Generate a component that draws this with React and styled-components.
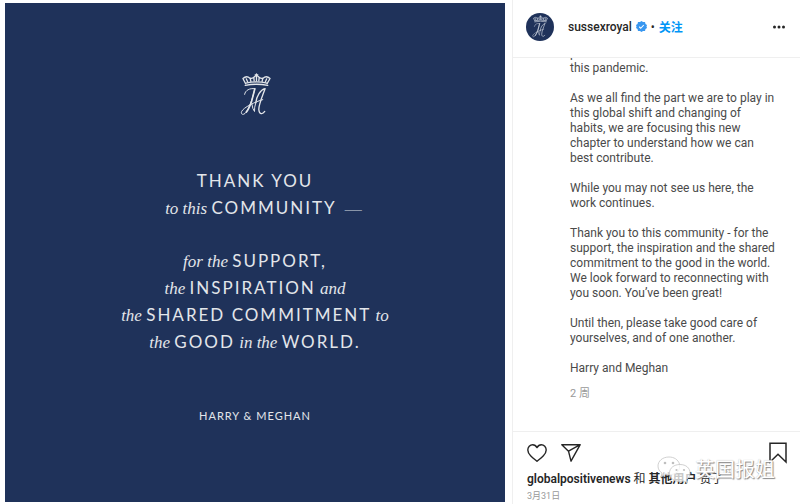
import React from 'react';
import styled, { createGlobalStyle } from 'styled-components';

const GlobalStyle = createGlobalStyle`
  * {
    box-sizing: border-box;
  }

  body {
    margin: 0;
    background: #fff;
    color: #262626;
    font-family: Roboto, 'Noto Sans CJK SC', sans-serif;
  }
`;

const Page = styled.main`
  position: relative;
  display: grid;
  grid-template-columns: minmax(0, 1fr) 288px;
  column-gap: 7px;
  height: 100vh;
  padding-left: 5px;
`;

/* left side: the posted picture */
const Poster = styled.section`
  display: flex;
  flex-direction: column;
  align-items: center;
  margin: 3px 0 2px;
  padding-top: 69px;
  background: #1f325a;
  color: #e3e6ea;
`;

const Message = styled.p`
  margin: ${(props) => props.$top}px 0 0;
  font-family: 'Liberation Serif', serif;
  font-size: 17px;
  font-style: italic;
  line-height: 27px;
  text-align: center;
  white-space: nowrap;
`;

const Caps = styled.span`
  font-family: Lato, sans-serif;
  font-style: normal;
  line-height: 1;
  letter-spacing: 2px;
`;

/* hangs outside the centred line */
const Dash = styled.span`
  display: inline-block;
  width: 0;
  padding-left: 4px;
  color: #8995a8;
  font-style: normal;
  line-height: 1;
`;

const Signature = styled.p`
  margin: 52px 0 0;
  font-family: Lato, sans-serif;
  font-size: 11px;
  line-height: 16px;
  letter-spacing: 1px;
`;

/* right side */
const Panel = styled.aside`
  display: flex;
  flex-direction: column;
  min-height: 0;
  border-left: 1px solid #efefef;
`;

const Header = styled.header`
  display: flex;
  flex: none;
  align-items: center;
  height: 58px;
  padding: 0 14px 4px 13px;
  border-bottom: 1px solid #efefef;
  font-size: 12px;
`;

const Avatar = styled.span`
  display: flex;
  align-items: center;
  justify-content: center;
  width: 28px;
  height: 28px;
  margin-right: 14px;
  border-radius: 50%;
  background: #1f325a;
  color: #c9d0dc;
`;

const UserLink = styled.a`
  color: #262626;
  font-weight: ${(props) => (props.$bold ? 600 : 500)};
  text-decoration: none;
`;

const Badge = styled.svg`
  margin: 0 4px;
`;

const PlainButton = styled.button`
  display: flex;
  padding: 0;
  border: 0;
  background: none;
  color: #262626;
  font: inherit;
  cursor: pointer;
`;

const FollowButton = styled(PlainButton)`
  margin-left: 4px;
  color: #0095f6;
  font-weight: 700;
`;

const EndButton = styled(PlainButton)`
  margin-left: auto;
`;

/* scrolled to its end, so the text sits on the bottom edge */
const Caption = styled.div`
  display: flex;
  flex: 1;
  flex-direction: column;
  justify-content: flex-end;
  min-height: 0;
  padding: 0 12px 30px 57px;
  overflow: hidden;
  color: #4a4a4a;
  font-size: 12px;
  line-height: 15px;
`;

const Paragraph = styled.p`
  flex: none;
  margin: 0 0 15px;
  white-space: pre-line;
`;

const Age = styled.time`
  flex: none;
  margin-top: -5px;
  color: #999;
  font-size: 11px;
`;

const Footer = styled.footer`
  flex: none;
  padding: 10px 13px 0 14px;
  border-top: 1px solid #efefef;
`;

const Actions = styled.div`
  display: flex;
  align-items: center;
  gap: 14px;
  height: 22px;
`;

const Likes = styled.p`
  margin: 6px 0 0;
  font-size: 12px;
  line-height: 18px;
  white-space: nowrap;
`;

const Posted = styled.time`
  display: block;
  color: #999;
  font-size: 9px;
  line-height: 16px;
`;

const Watermark = styled.div`
  position: absolute;
  right: 25px;
  bottom: 19px;
  display: flex;
  align-items: center;
  gap: 4px;
  color: #fff;
  font-size: 20px;
  line-height: 30px;
  text-shadow: 1px 1px 1px #888, 0 0 1px #bbb;
  pointer-events: none;
`;

const Monogram = ({ width, height }) => (
  <svg width={width} height={height} viewBox="55 38 100 135" fill="none" stroke="currentColor" strokeLinecap="round" strokeLinejoin="round" aria-hidden="true">
    <path d="M74 78Q108 71 142 78M76 71Q108 64 140 71" strokeWidth="4" />
    <path d="M75 73L67 57Q78 47 88 56Q96 59 103 51L108 46L113 51Q120 59 128 56Q138 47 149 57L140 73" strokeWidth="4" />
    <path d="M81 67l-4-9M91 66l-2-9M101 64l-1-8M108 64V43M104 46h8M115 64l1-8M125 66l2-9M135 67l4-9" strokeWidth="4" />
    <path d="M72 105C74 92 88 86 103 88C97 112 89 142 77 159C69 170 59 166 63 157C68 145 105 127 127 121" strokeWidth="3" />
    <path d="M103 88L93 127Q84 151 77 159" strokeWidth="5" />
    <path d="M94 135Q96 150 102 157Q101 145 106 130" strokeWidth="3" />
    <path d="M134 88C120 91 108 110 106 130M134 88C127 108 115 135 115 151C116 166 126 167 133 157" strokeWidth="4" />
  </svg>
);

const HeartIcon = () => (
  <svg width="20" height="20" viewBox="0 0 20 20" fill="none" stroke="currentColor" strokeWidth="1.4" strokeLinejoin="round" aria-hidden="true">
    <path d="M10 18.3C8 16.6 5.8 14.9 3.6 12.7C1.8 10.9.8 9.4.8 7.1C.8 4.1 3 1.7 5.7 1.7C7.6 1.7 9 2.7 10 4.6C11 2.7 12.4 1.7 14.3 1.7C17 1.7 19.2 4.1 19.2 7.1C19.2 9.4 18.2 10.9 16.4 12.7C14.2 14.9 12 16.6 10 18.3Z" />
  </svg>
);

const ShareIcon = () => (
  <svg width="20" height="20" viewBox="0 0 20 20" fill="none" stroke="currentColor" strokeWidth="1.4" strokeLinejoin="round" aria-hidden="true">
    <path d="M.8 1.7H19.2L10 18.2L7.5 8.2ZM7.5 8.2L19.2 1.7" />
  </svg>
);

const SaveIcon = () => (
  <svg width="18" height="22" viewBox="0 0 18 22" fill="none" stroke="currentColor" strokeWidth="1.5" aria-hidden="true">
    <path d="M1 1.2H17V20L9 12.3L1 20Z" />
  </svg>
);

const MoreIcon = () => (
  <svg width="14" height="14" viewBox="0 0 14 14" fill="currentColor" aria-hidden="true">
    <circle cx="2.5" cy="7" r="1.5" />
    <circle cx="7" cy="7" r="1.5" />
    <circle cx="11.5" cy="7" r="1.5" />
  </svg>
);

const ChatLogo = () => (
  <svg width="34" height="28" viewBox="0 0 34 28" fill="#fff" fillOpacity=".75" stroke="#c4c4c4" strokeWidth=".8" aria-hidden="true">
    <path d="M12 1C5.5 1 1 5 1 10C1 13 2.5 15.5 5 17L4 21L8.5 18.5Q12 19.5 15 18.5C22 17 23 13 22.5 8C21 3.5 17 1 12 1Z" />
    <path d="M23 8.5C17 8.5 12.5 12 12.5 17C12.5 22 17 25.5 23 25.5L27 25L30.5 27L29.5 23.5C32 22 33 19.5 33 17C33 12 29 8.5 23 8.5Z" />
    <g fill="#aaa" stroke="none">
      <circle cx="8" cy="7" r="1.3" />
      <circle cx="16" cy="7" r="1.3" />
      <circle cx="19.5" cy="14" r="1.1" />
      <circle cx="27" cy="14" r="1.1" />
    </g>
  </svg>
);

const paragraphs = [
  'presented themselves as a result of\nthis pandemic.',
  'As we all find the part we are to play in\nthis global shift and changing of\nhabits, we are focusing this new\nchapter to understand how we can\nbest contribute.',
  'While you may not see us here, the\nwork continues.',
  'Thank you to this community - for the\nsupport, the inspiration and the shared\ncommitment to the good in the world.\nWe look forward to reconnecting with\nyou soon. You’ve been great!',
  'Until then, please take good care of\nyourselves, and of one another.',
  'Harry and Meghan',
];

const App = () => {
  return (
    <>
      <GlobalStyle />
      <Page>
        <Poster>
          <Monogram width={33} height={45} />
          <Message $top={51}>
            <Caps>THANK YOU</Caps>
            <br />
            to this <Caps>COMMUNITY</Caps> <Dash>—</Dash>
          </Message>
          <Message $top={26}>
            for the <Caps>SUPPORT,</Caps>
            <br />
            the <Caps>INSPIRATION</Caps> and
            <br />
            the <Caps>SHARED COMMITMENT</Caps> to
            <br />
            the <Caps>GOOD</Caps> in the <Caps>WORLD.</Caps>
          </Message>
          <Signature>HARRY &amp; MEGHAN</Signature>
        </Poster>

        <Panel>
          <Header>
            <Avatar>
              <Monogram width={18} height={23} />
            </Avatar>
            <UserLink href="#sussexroyal">sussexroyal</UserLink>
            <Badge width="11" height="11" viewBox="0 0 22 22" role="img" aria-label="verified">
              <path d="M11 0l3 2 4 0 1 4 3 2-1 3 1 3-3 2-1 4-4 0-3 2-3-2-4 0-1-4-3-2 1-3-1-3 3-2 1-4 4 0z" fill="#3897f0" />
              <path d="M6.5 11.5l3 3 6-6.5" fill="none" stroke="#fff" strokeWidth="2.2" />
            </Badge>
            <span>•</span>
            <FollowButton type="button">关注</FollowButton>
            <EndButton type="button" aria-label="More options">
              <MoreIcon />
            </EndButton>
          </Header>

          <Caption>
            {paragraphs.map((text) => (
              <Paragraph key={text}>{text}</Paragraph>
            ))}
            <Age>2 周</Age>
          </Caption>

          <Footer>
            <Actions>
              <PlainButton type="button" aria-label="Like">
                <HeartIcon />
              </PlainButton>
              <PlainButton type="button" aria-label="Share">
                <ShareIcon />
              </PlainButton>
              <EndButton type="button" aria-label="Save">
                <SaveIcon />
              </EndButton>
            </Actions>
            <Likes>
              <UserLink $bold href="#globalpositivenews">globalpositivenews</UserLink> 和 <UserLink $bold href="#likes">其他用户</UserLink> 赞了
            </Likes>
            <Posted>3月31日</Posted>
          </Footer>
        </Panel>

        <Watermark>
          <ChatLogo />
          <span>英国报姐</span>
        </Watermark>
      </Page>
    </>
  );
};

export default App;
